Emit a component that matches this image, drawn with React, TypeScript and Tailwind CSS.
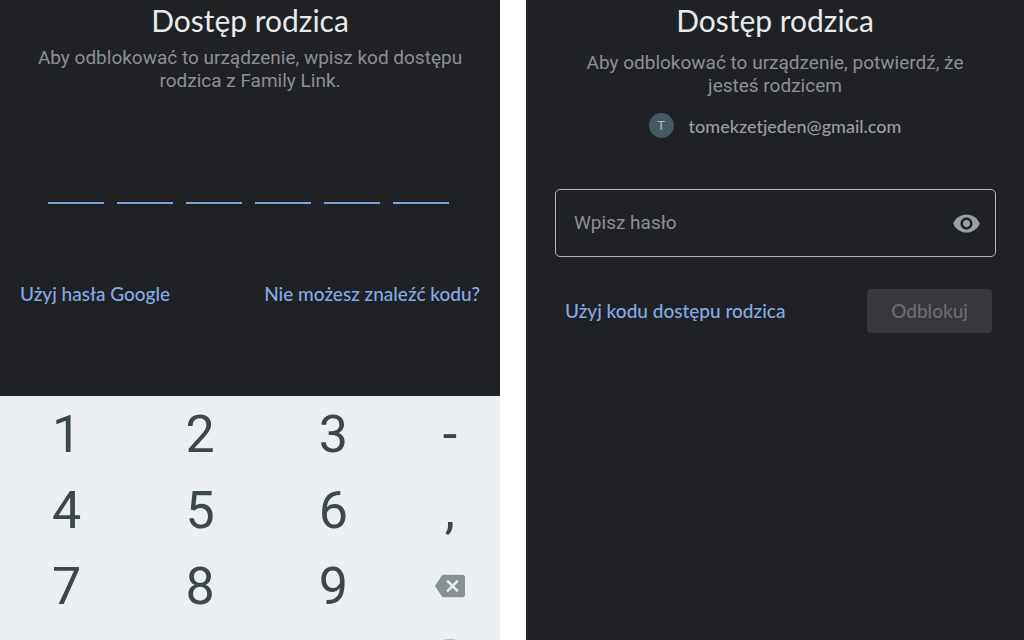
import { useState } from "react";
import type { ReactNode } from "react";
import { MdBackspace, MdVisibility } from "react-icons/md";

const KEYS = ["1", "2", "3", "-", "4", "5", "6", ",", "7", "8", "9"];
const CODE_LENGTH = 6;

const PanelHeader = ({ children }: { children: ReactNode }) => (
  <h1 className="text-center font-['Lato',sans-serif] text-[30px] leading-10 text-[#e8eaed]">
    {children}
  </h1>
);

const LinkButton = ({ children }: { children: ReactNode }) => (
  <button
    type="button"
    className="font-['Lato',sans-serif] text-[19px] leading-6 font-medium text-[#86aae6]"
  >
    {children}
  </button>
);

const Keypad = () => (
  <div className="grid min-h-0 flex-1 auto-rows-[76px] grid-cols-[4fr_4fr_4fr_3fr] overflow-hidden bg-[#eceff1] text-[52px] text-[#3c474b]">
    {KEYS.map((key) => (
      <button key={key} type="button" className="pt-0.5 leading-none">
        {key}
      </button>
    ))}
    <button
      type="button"
      aria-label="Usuń"
      className="flex items-center justify-center"
    >
      <MdBackspace className="size-[30px] text-[#879093]" />
    </button>

    {/* Enter */}
    <button
      type="button"
      aria-label="Gotowe"
      className="col-start-4 size-[46px] place-self-center rounded-full bg-[#80cbc4]"
    />
  </div>
);

const CodePanel = () => (
  <section className="flex min-h-0 min-w-0 flex-1 flex-col bg-[#202124]">
    <PanelHeader>Dostęp rodzica</PanelHeader>
    <p className="mt-1.5 px-7 text-center text-[19px] leading-[23px] text-[#8d9094]">
      Aby odblokować to urządzenie, wpisz kod dostępu{" "}
      <br />
      rodzica z Family Link.
    </p>

    <div className="mt-[72px] flex gap-[13px] pr-[51px] pl-12">
      {Array.from({ length: CODE_LENGTH }, (_, i) => (
        <input
          key={i}
          type="password"
          inputMode="numeric"
          maxLength={1}
          aria-label={`Cyfra ${i + 1}`}
          className="h-10 min-w-0 flex-1 border-b-2 border-[#7ba3d8] bg-transparent text-center text-[20px] text-[#e8eaed] outline-none"
        />
      ))}
    </div>

    <div className="mt-[78px] mb-[90px] flex justify-between px-5">
      <LinkButton>Użyj hasła Google</LinkButton>
      <LinkButton>Nie możesz znaleźć kodu?</LinkButton>
    </div>

    <Keypad />
  </section>
);

const PasswordPanel = () => {
  const [visible, setVisible] = useState(false);

  return (
    <section className="min-w-0 bg-[#202124]">
      <PanelHeader>Dostęp rodzica</PanelHeader>
      <p className="mt-[11px] px-12 text-center text-[19px] leading-[23px] text-[#8d9094]">
        Aby odblokować to urządzenie, potwierdź, że
        <br />
        jesteś rodzicem
      </p>

      {/* Account */}
      <div className="mt-4 flex items-center justify-center gap-[15px]">
        <span className="flex size-[25px] items-center justify-center rounded-full bg-[#455a64] text-[13px] text-[#b0c4cb]">
          T
        </span>
        <span className="font-['Lato',sans-serif] text-[18px] leading-6 font-medium text-[#9a9da1]">
          tomekzetjeden@gmail.com
        </span>
      </div>

      <div className="mt-[51px] mr-7 ml-[29px] flex h-[68px] items-center rounded-[5px] border border-[#b4b6b8] pr-3.5 pl-[18px]">
        <input
          type={visible ? "text" : "password"}
          placeholder="Wpisz hasło"
          aria-label="Wpisz hasło"
          className="min-w-0 flex-1 bg-transparent text-[19px] text-[#e8eaed] outline-none placeholder:text-[#8d9094]"
        />
        <button
          type="button"
          aria-label="Pokaż hasło"
          onClick={() => setVisible(!visible)}
        >
          <MdVisibility className="size-[29px] text-[#9aa0a3]" />
        </button>
      </div>

      <div className="mt-8 flex items-center justify-between pr-8 pl-[39px]">
        <LinkButton>Użyj kodu dostępu rodzica</LinkButton>
        <button
          type="button"
          disabled
          className="h-11 rounded-sm bg-[#37383b] px-6 font-['Lato',sans-serif] text-[19px] font-medium text-[#6c6e71]"
        >
          Odblokuj
        </button>
      </div>
    </section>
  );
};

const App = () => (
  <main className="grid h-screen grid-cols-[minmax(0,500fr)_minmax(0,498fr)] grid-rows-[minmax(0,1fr)] gap-[26px] overflow-hidden bg-white font-['Roboto',sans-serif]">
    <CodePanel />
    <PasswordPanel />
  </main>
);

export default App;
